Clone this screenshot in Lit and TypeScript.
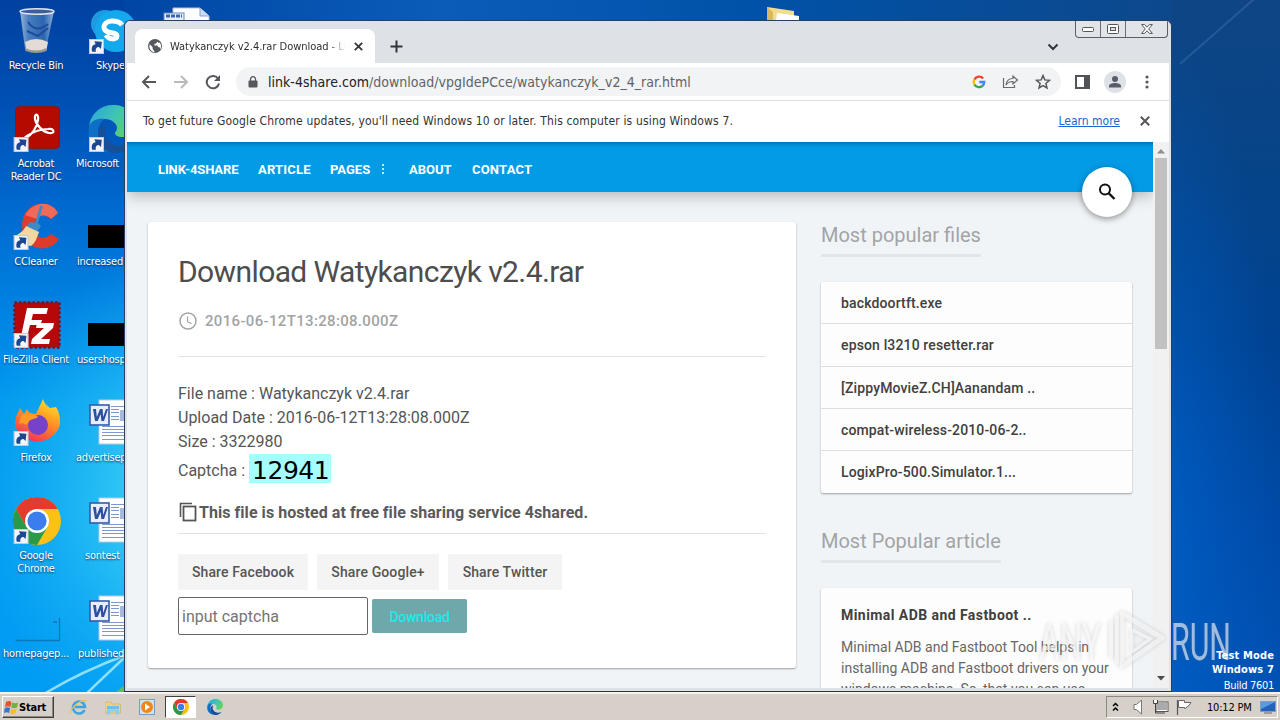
import { LitElement, html, css, svg, nothing } from "lit";
import { customElement } from "lit/decorators.js";

const shortcut = svg`<g><rect x="0.5" y="0.5" width="13" height="13" fill="#f4f6fa" stroke="#c3cbd8"/><path d="M3 12C1.8 8 3.2 5 6.200 4.800L5 2.200l7 .4-.8 6.800-2-2C6.800 7.400 5.600 9.400 6.600 12z" fill="#1c4690"/></g>`;

const chromeLogo = svg`<circle cx="24" cy="24" r="24" fill="#fbc116"/>
  <path d="M24 24 34.4 30 24 48A24 24 0 0 1 3.2 12L13.6 30z" fill="#2a9a48"/>
  <path d="M3.2 12A24 24 0 0 1 44.8 12H24L13.6 30z" fill="#e33b2e"/>
  <circle cx="24" cy="24" r="12" fill="#fff"/><circle cx="24" cy="24" r="9.6" fill="#3b7ded"/>`;

const edgeLogo = svg`<defs><linearGradient id="eg" x1="0" y1="0" x2="1" y2=".4"><stop offset="0" stop-color="#28a5dc"/><stop offset=".6" stop-color="#3fc4b4"/><stop offset="1" stop-color="#63d063"/></linearGradient></defs>
  <path d="M1 21C3 8 13 0 25 0c13 0 23 8 23 19 0 8-6 13-13 13-6 0-8-2-8-4 0-1 2-2 2-5 0-5-6-9-12-9-8 0-14 4-16 7z" fill="url(#eg)"/>
  <path d="M1 21c3-6 9-8 16-7-5 3-7 8-7 14 0 8 6 17 16 19C11 50-2 38 1 21z" fill="#0f6fc4"/>
  <path d="M19 19c-5 8-1 21 13 22 5 0 9-1 12-3-5 7-12 10-19 10-9-1-15-10-15-18 0-6 4-10 9-11z" fill="#174f98"/>`;

const wordIcon = svg`<rect x="10" y="1" width="40" height="44" fill="#fdfeff" stroke="#b9c7e0"/>
  <g stroke="#7f98cc" stroke-width="1"><path d="M22 7.5h26M22 10.5h8M22 13.5h8M22 17.500h8M22 20.500h8M13 27.500h36M13 30.500h36M13 33.500h36M13 36.500h36M13 40.500h36"/></g>
  <rect x="31" y="11" width="16" height="11" fill="#a9b9dc"/>
  <rect x="1" y="6" width="19" height="20" fill="#e7eefb" stroke="#355ba9" stroke-width="1.6"/>
  <path d="M4 10h3l.8 8L11 10h2.600l.6 8L17 10h2l-4 12h-2.600l-.7-7-3 7H6z" fill="#2c4f9e"/>`;

const icons: Record<string, unknown> = {
  bin: svg`<defs><linearGradient id="bn"><stop offset="0" stop-color="#a3bddb"/><stop offset=".25" stop-color="#4f82c0"/><stop offset=".7" stop-color="#2f68b2"/><stop offset="1" stop-color="#9dbbdc"/></linearGradient></defs>
    <path d="M4 4 9 42q10 6 21 0L38 4z" fill="url(#bn)" opacity=".92"/><path d="M9 35q11-6 23 0l-1.500 8q-10 4-20 0z" fill="#e3dcd4"/><path d="M9 41q11 5 21.500 0v3q-10 4-21 0z" fill="#9b9894"/>
    <ellipse cx="21" cy="4.500" rx="17" ry="2.800" fill="#3c5f99" stroke="#e0e7ee" stroke-width="1.400"/><path d="M12 15q8 12 20 2M11 24l11 5 10-8" stroke="#1d4c9a" fill="none" stroke-width="2"/>`,
  acrobat: svg`<rect x="2.500" y="1.500" width="44" height="42" rx="4" fill="#b30b00" stroke="#7e1a1a"/>
    <path d="M13 33c6-3 11-11 12-18 1-7-4-7-3-1 1 6 8 13 14 14 7 1 5-5-1-4-8 0-15 3-21 7-3 2-3 3-1 2z" fill="none" stroke="#fff" stroke-width="2.200"/>`,
  ccleaner: svg`<path d="M45 10 38 16c-6-6-16-4-17 6-1 12 9 17 17 9l8 5C38 49 19 48 12 36 5 18 12 3 26 1c8-1 15 2 19 9z" fill="#de3b2b"/><path d="M45 10 38 16c-5-5-11-5-14 0L12 12C20-1 37-4 45 10z" fill="#ef6a58"/>
    <path d="M27 3h3l-5 17 3 3-5 7-10-6 4-5 5 1z" fill="#3d8bc6"/><path d="M13 23l13 6c-2 6-4 11-8 14C11 42 5 38 1 33c6-2 10-6 12-10z" fill="#f3d7a0"/>`,
  filezilla: svg`<rect x="1.500" y="1.500" width="45" height="45" fill="#b60808" stroke="#7c1420" stroke-width="2.500" stroke-dasharray="2.500 2"/>
    <path d="M14 7h21l-1.500 6H20l-1.500 6H29l-1.500 5H17l-4 16H7zM24 22h17l-1 5-12 11h9l-1 5H18l1-5 12-11h-8z" fill="#fff"/>`,
  firefox: svg`<defs><linearGradient id="fx" x1=".8" y1="0" x2=".3" y2="1"><stop offset="0" stop-color="#ffe32e"/><stop offset=".45" stop-color="#ff9421"/><stop offset="1" stop-color="#f52f57"/></linearGradient></defs>
    <path d="M7 9l4 6 3-5c1 3 4 5 9 5l7-15c2 6 5 7 7 9l6-1c4 6 4 12 4 17a23 22 0 0 1-45 0C2 18 5 14 7 9z" fill="url(#fx)"/><circle cx="25" cy="26" r="10" fill="#7542c9"/><path d="M8 17c6-5 15-2 17 1-4 3-9 1-11 8-3-2-7-2-8-1z" fill="#ff9b22"/>`,
  chrome: chromeLogo,
  skype: svg`<circle cx="14" cy="15" r="14" fill="#1e9be0"/><circle cx="25" cy="22" r="21" fill="#14a9ec"/><path d="M34 15c-2-3-6-4-10-4-5 0-8 3-8 6 0 8 13 4 13 9 0 4-8 4-11-1" transform="translate(-3 1)" fill="none" stroke="#fff" stroke-width="5"/>`,
  edge: edgeLogo,
  black: svg`<rect width="48" height="23" fill="#000"/>`,
  word: wordIcon,
  homepage: svg`<path d="M.5 23.500h44V1M38 5h4" fill="none" stroke="#1076b8" stroke-width="1.300"/>`,
  folder: svg`<path d="M0 1 27 5v22H0z" fill="#f4dc8c"/><path d="M0 1 6 6v16H0z" fill="#dcb85c"/><path d="M10 7l22 3v12H8z" fill="#fff"/>`,
  sheet: svg`<path d="M9 1h27l9 8v20H9z" fill="#fbfdff" stroke="#b7c5dd"/><path d="M36 1v8h9" fill="#cfdcf0" stroke="#8ba3cf"/><rect x="0" y="6" width="20" height="20" fill="#e7eefb" stroke="#6885c4"/><path d="M2 9h16" stroke="#3e63ab" stroke-width="3" stroke-dasharray="4 1"/>`,
};

interface Shortcut { icon: string; x: number; y: number; w: number; h: number; vb: string; link?: boolean; label?: string[]; lx?: number; ly?: number; center?: boolean }

const shortcuts: Shortcut[] = [
  { icon: "bin", x: 16, y: 7, w: 43, h: 48, vb: "0 0 43 48", label: ["Recycle Bin"], lx: 36, ly: 59, center: true },
  { icon: "acrobat", x: 13, y: 105, w: 48, h: 48, vb: "0 0 48 48", link: true, label: ["Acrobat", "Reader DC"], lx: 36, ly: 157, center: true },
  { icon: "ccleaner", x: 13, y: 203, w: 48, h: 48, vb: "0 0 48 48", link: true, label: ["CCleaner"], lx: 36, ly: 255, center: true },
  { icon: "filezilla", x: 13, y: 301, w: 48, h: 48, vb: "0 0 48 48", link: true, label: ["FileZilla Client"], lx: 36, ly: 353, center: true },
  { icon: "firefox", x: 13, y: 399, w: 48, h: 48, vb: "0 0 48 48", link: true, label: ["Firefox"], lx: 36, ly: 451, center: true },
  { icon: "chrome", x: 13, y: 497, w: 48, h: 48, vb: "0 0 48 48", link: true, label: ["Google", "Chrome"], lx: 36, ly: 549, center: true },
  { icon: "homepage", x: 15, y: 617, w: 46, h: 25, vb: "0 0 46 25", label: ["homepagep..."], lx: 36, ly: 647, center: true },
  { icon: "skype", x: 91, y: 9, w: 48, h: 48, vb: "0 0 48 48", link: true, label: ["Skype"], lx: 96, ly: 59 },
  { icon: "edge", x: 88, y: 105, w: 48, h: 48, vb: "0 0 48 48", link: true, label: ["Microsoft"], lx: 76, ly: 157 },
  { icon: "black", x: 88, y: 225, w: 48, h: 23, vb: "0 0 48 23", label: ["increased"], lx: 77, ly: 255 },
  { icon: "black", x: 88, y: 323, w: 48, h: 23, vb: "0 0 48 23", label: ["usershosp"], lx: 77, ly: 353 },
  { icon: "word", x: 89, y: 399, w: 48, h: 48, vb: "0 0 48 48", label: ["advertisep"], lx: 76, ly: 451 },
  { icon: "word", x: 89, y: 497, w: 48, h: 48, vb: "0 0 48 48", label: ["sontest"], lx: 85, ly: 549 },
  { icon: "word", x: 89, y: 595, w: 48, h: 48, vb: "0 0 48 48", label: ["published"], lx: 78, ly: 647 },
  { icon: "sheet", x: 164, y: 7, w: 48, h: 30, vb: "0 0 48 30" },
  { icon: "folder", x: 767, y: 6, w: 34, h: 30, vb: "0 0 34 30" },
];

@customElement("desktop-icons")
class DesktopIcons extends LitElement {
  static styles = css`
    :host { display: block; }
    .icon { position: absolute; overflow: visible; }
    .label { position: absolute; font: 11px/13px "DejaVu Sans Condensed", "DejaVu Sans", sans-serif; font-stretch: condensed; letter-spacing: -0.22px; color: #fff; text-shadow: 0 1px 2px rgba(0, 20, 60, 0.8); white-space: nowrap; }
    .center { text-align: center; transform: translateX(-50%); }
    .line { display: block; }
  `;
  render() {
    return shortcuts.map((s) => html`
      <svg class="icon" style="left:${s.x}px;top:${s.y}px" width=${s.w} height=${s.h} viewBox=${s.vb}>
        ${icons[s.icon]}${s.link ? svg`<g transform="translate(${s.x > 80 ? 89 - s.x : 0.6} ${s.icon === "skype" ? 30 : 32}) scale(1.07)">${shortcut}</g>` : nothing}
      </svg>
      ${s.label ? html`<div class="label ${s.center ? "center" : ""}" style="left:${s.lx}px;top:${s.ly}px">${s.label.map((l) => html`<span class="line">${l}</span>`)}</div>` : nothing}`);
  }
}

@customElement("browser-chrome")
class BrowserChrome extends LitElement {
  static styles = css`
    :host { display: block; font-family: "DejaVu Sans Condensed", "DejaVu Sans", sans-serif; font-stretch: condensed; color: #3c4043; }
    * { box-sizing: border-box; }
    svg { display: block; flex: none; }
    .strip { height: 42px; display: flex; align-items: flex-end; background: #dee1e6; padding-left: 8px; position: relative; }
    .tab { width: 240px; height: 34px; background: #fff; border-radius: 8px 8px 0 0; display: flex; align-items: center; padding: 0 12px 0 13px; }
    .tab-title { width: 176px; margin: 0 8px; font-size: 11px; letter-spacing: -0.03px; white-space: nowrap; overflow: hidden; -webkit-mask: linear-gradient(90deg, #000 90%, transparent 100%); mask: linear-gradient(90deg, #000 90%, transparent 100%); color: #2c2f33; }
    .plus { margin: 0 0 10px 15px; }
    .caret { margin: 0 110px 12px auto; }
    .controls { position: absolute; right: 1px; top: 0; height: 17px; width: 93px; border: 1px solid #5b5e63; border-top: 0; border-radius: 0 0 4px 4px; display: grid; grid-template-columns: 25px 25px 1fr; background: #e1e4e9; }
    .ctl { display: grid; place-items: center; border-right: 1px solid #6b6e73; }
    .ctl:last-child { border: 0; }
    .toolbar { height: 38px; display: flex; align-items: center; background: #fff; padding-left: 13px; border-bottom: 1px solid #dcdee2; }
    .nav-icon { margin-right: 14px; }
    .omni { width: 825px; height: 29px; border-radius: 15px; background: #f1f3f4; display: flex; align-items: center; padding: 0 10px 0 12px; font-size: 14px; letter-spacing: 0.02px; color: #5f6368; }
    .url { margin-left: 10px; flex: 1; white-space: nowrap; }
    .host { color: #202124; }
    .action { margin-left: 16px; }
    .panel { margin: 0 14px; }
    .avatar { width: 22px; height: 22px; border-radius: 50%; background: #dee1e6; display: grid; place-items: center; margin-right: 19px; }
    .info { height: 41px; display: flex; align-items: center; background: #fff; padding: 0 19px 2px 16px; font-size: 12px; color: #333; }
    .info-text { flex: 1; letter-spacing: 0.16px; white-space: nowrap; }
    .learn { color: #1a66d6; text-decoration: underline; margin-right: 20px; letter-spacing: 0; }
  `;
  render() {
    return html`
      <div class="strip">
        <div class="tab">
          <svg width="14" height="14" viewBox="0 0 24 24"><circle cx="12" cy="12" r="12" fill="#55585c"/><path d="M3 9l5 5v3l3 4v2C4 21 1 15 3 9zm13-6v2l-3 3h-2v3h5l2 3h2l1 4c2-4 2-9-1-12l-2 1-2-3z" fill="#fff"/></svg>
          <span class="tab-title">Watykanczyk v2.4.rar Download - Link</span>
          <svg width="9" height="9" viewBox="0 0 9 9"><path d="M.8.8l7.400 7.400M8.200.8.8 8.200" stroke="#333639" stroke-width="1.800"/></svg>
        </div>
        <svg class="plus" width="13" height="13" viewBox="0 0 13 13"><path d="M6.500.5v12M.5 6.500h12" stroke="#333639" stroke-width="2"/></svg>
        <svg class="caret" width="12" height="8" viewBox="0 0 12 8"><path d="M1.500 1.500 6 6l4.500-4.500" fill="none" stroke="#333639" stroke-width="2"/></svg>
        <div class="controls">
          <span class="ctl"><svg width="12" height="6" viewBox="0 0 12 6"><rect x=".5" y="1.500" width="11" height="4" rx="1" fill="#fff" stroke="#555"/></svg></span>
          <span class="ctl"><svg width="12" height="10" viewBox="0 0 12 10"><rect x=".5" y=".5" width="11" height="9" rx="1" fill="#fff" stroke="#555"/><rect x="3.500" y="3.500" width="5" height="3" fill="#dee1e6" stroke="#555"/></svg></span>
          <span class="ctl"><svg width="12" height="10" viewBox="0 0 12 10"><path d="M.6.6h3l2.400 2.600L8.400.6h3L7.700 5l3.700 4.400h-3L6 6.800 3.600 9.400h-3L4.300 5z" fill="#fff" stroke="#555"/></svg></span>
        </div>
      </div>
      <div class="toolbar">
        <svg class="nav-icon" width="18" height="16" viewBox="0 0 18 16"><path d="M16 8H3M9 2 3 8l6 6" fill="none" stroke="#55585c" stroke-width="2"/></svg>
        <svg class="nav-icon" width="18" height="16" viewBox="0 0 18 16"><path d="M2 8h13M9 2l6 6-6 6" fill="none" stroke="#b8babd" stroke-width="2"/></svg>
        <svg class="nav-icon" width="18" height="16" viewBox="0 0 18 16"><path d="M14 4.500A6.200 6.200 0 1 0 15 9.500" fill="none" stroke="#55585c" stroke-width="2"/><path d="M16 1v6h-6z" fill="#55585c"/></svg>
        <div class="omni">
          <svg width="10" height="12" viewBox="0 0 10 12"><rect x=".5" y="4.500" width="9" height="7" rx="1" fill="#55585c"/><path d="M2.500 5V3.200a2.500 2.500 0 0 1 5 0V5" fill="none" stroke="#55585c" stroke-width="1.300"/></svg>
          <span class="url"><span class="host">link-4share.com</span>/download/vpgIdePCce/watykanczyk_v2_4_rar.html</span>
          <svg class="action" width="14" height="14" viewBox="0 0 48 48"><g fill="none" stroke-width="8"><path d="M38 12A18 18 0 0 0 8.500 15" stroke="#ea4335"/><path d="M8.500 15a18 18 0 0 0 0 18" stroke="#fbbc05"/><path d="M8.500 33A18 18 0 0 0 36 37" stroke="#34a853"/><path d="M36 37a18 18 0 0 0 6-13H25" stroke="#4285f4"/></g></svg>
          <svg class="action" width="17" height="15" viewBox="0 0 17 15"><path d="M1.500 4v9.500h11V11M4 11c.5-4 3-6.500 7-6.500V2l4.500 4L11 10V7.500C8 7.500 5.500 8.500 4 11z" fill="none" stroke="#66696d" stroke-width="1.200"/></svg>
          <svg class="action" width="16" height="16" viewBox="0 0 16 16"><path d="M8 1.500l1.800 4.400 4.700.4-3.600 3.100 1.100 4.600L8 11.600 4 14l1.100-4.600L1.500 6.300l4.700-.4z" fill="none" stroke="#55585c" stroke-width="1.500"/></svg>
        </div>
        <svg class="panel" width="15" height="14" viewBox="0 0 15 14"><rect x="1" y="1" width="13" height="12" fill="none" stroke="#505357" stroke-width="2"/><path d="M9 0h6v14H9z" fill="#505357"/></svg>
        <span class="avatar"><svg width="14" height="14" viewBox="0 0 14 14"><circle cx="7" cy="4" r="3" fill="#5a5d66"/><path d="M1 12.500V11c0-2 3-3 6-3s6 1 6 3v1.500z" fill="#5a5d66"/></svg></span>
        <svg width="4" height="14" viewBox="0 0 4 14"><g fill="#55585c"><circle cx="2" cy="2" r="1.600"/><circle cx="2" cy="7" r="1.600"/><circle cx="2" cy="12" r="1.600"/></g></svg>
      </div>
      <div class="info">
        <span class="info-text">To get future Google Chrome updates, you'll need Windows 10 or later. This computer is using Windows 7.</span>
        <span class="learn">Learn more</span>
        <svg width="10" height="10" viewBox="0 0 10 10"><path d="M.8.8l8.400 8.400M9.200.8.8 9.200" stroke="#55585c" stroke-width="2"/></svg>
      </div>`;
  }
}

@customElement("share-page")
class SharePage extends LitElement {
  static styles = css`
    :host { display: block; position: relative; height: 546px; background: #f1f4f7; font-family: Roboto, sans-serif; overflow: hidden; color: #555; }
    * { box-sizing: border-box; }
    .view { display: flex; height: 100%; }
    .page { width: 1026px; height: 100%; overflow: hidden; }
    .nav { height: 50px; background: #039be5; box-shadow: inset 0 5px 5px -4px rgba(0, 40, 80, 0.55), 0 3px 16px rgba(0, 0, 0, 0.28); display: grid; grid-template-columns: 100px 72px 49px 30px 63px auto; align-items: center; padding: 4px 0 0 31px; color: #fff; font-size: 13px; font-weight: 700; white-space: nowrap; }
    .wide { letter-spacing: 0.2px; }
    .tight { letter-spacing: -0.12px; }
    .dots { opacity: 0.75; }
    .columns { display: grid; grid-template-columns: 648px 311px; column-gap: 25px; padding: 30px 21px 0; }
    .card { background: #fff; border-radius: 2px; box-shadow: 0 1px 2px rgba(0, 0, 0, 0.35); }
    .main { height: 446px; padding: 30px 30px 0; }
    .title { margin: 0; font-size: 30px; font-weight: 400; line-height: 40px; color: #4d4d4d; white-space: nowrap; letter-spacing: -0.61px; }
    .date { display: flex; align-items: center; height: 20px; margin-top: 19px; font-size: 15px; color: #a3a3a3; font-weight: 500; gap: 8px; letter-spacing: 0.33px; }
    .rule { height: 1px; background: #e2e2e2; }
    .rule-date { margin-top: 25px; }
    .rule-hosted { margin-top: 9px; }
    .meta { margin-top: 25px; font-size: 16px; line-height: 24px; white-space: nowrap; }
    .cap-row { display: flex; align-items: center; height: 34px; gap: 4px; }
    .code { width: 82px; height: 29px; margin-top: -5px; background: #a6fdfd; color: #000; font: 25px/34px "DejaVu Sans", sans-serif; letter-spacing: -0.5px; padding-left: 3px; }
    .hosted { display: flex; align-items: center; font-weight: 700; font-size: 16px; height: 24px; margin-top: 12px; color: #5a5a5a; white-space: nowrap; gap: 1px; letter-spacing: 0.05px; }
    .shares { display: flex; gap: 9px; margin-top: 20px; }
    .share { height: 36px; line-height: 36px; background: #f4f4f4; font-size: 14px; font-weight: 500; text-align: center; color: #555; white-space: nowrap; letter-spacing: 0.12px; }
    .form { display: flex; align-items: center; gap: 4px; margin-top: 7px; }
    .field { width: 190px; height: 38px; border: 1px solid #666; border-radius: 2px; line-height: 38px; padding-left: 3px; font-size: 16px; color: #757575; }
    .dl { width: 95px; height: 34px; line-height: 36px; border-radius: 2px; background: #6ea8aa; color: #1eeaea; font-size: 14px; font-weight: 500; text-align: center; letter-spacing: -0.25px; }
    .side-title { display: block; width: max-content; margin: 0; height: 35px; font-size: 20px; line-height: 26px; font-weight: 400; color: #a2a4a6; border-bottom: 3px solid #e2e6e9; white-space: nowrap; }
    .list { background: #fdfdfd; margin: 25px 0 35px; }
    .item { height: 42.300px; line-height: 42px; padding-left: 20px; font-size: 14px; font-weight: 500; color: #404040; border-bottom: 1px solid #dedede; white-space: nowrap; letter-spacing: 0.14px; }
    .item:last-child { border: 0; }
    .article { background: #fdfdfd; margin-top: 25px; padding: 16px 0 0 20px; height: 180px; }
    .article-title { font-size: 14px; font-weight: 700; line-height: 22px; color: #404040; letter-spacing: 0.44px; }
    .article-text { margin-top: 11px; font-size: 14px; line-height: 21px; color: #666; white-space: nowrap; }
    .row { display: block; }
    .scroll { width: 16px; background: #f1f1f1; display: flex; flex-direction: column; align-items: center; padding: 7px 0; }
    .thumb { width: 12px; height: 191px; margin-top: 4px; background: #c1c1c1; }
    .arrow-down { margin-top: auto; }
    .search { position: absolute; left: 955px; top: 25px; width: 50px; height: 50px; border-radius: 50%; background: #fff; box-shadow: 0 2px 6px rgba(0, 0, 0, 0.4); display: grid; place-items: center; }
  `;
  render() {
    const files = ["backdoortft.exe", "epson l3210 resetter.rar", "[ZippyMovieZ.CH]Aanandam ..", "compat-wireless-2010-06-2..", "LogixPro-500.Simulator.1..."];
    const shares: [string, number][] = [["Share Facebook", 130], ["Share Google+", 122], ["Share Twitter", 114]];
    return html`
      <div class="view">
        <div class="page">
          <div class="nav"><span class="tight">LINK-4SHARE</span><span class="wide">ARTICLE</span><span>PAGES</span><svg class="dots" width="8" height="10" viewBox="0 0 8 10"><path d="M3 0h2v2H3zM3 4h2v2H3zM3 8h2v2H3z" fill="#fff"/></svg><span>ABOUT</span><span class="wide">CONTACT</span></div>
          <div class="columns">
            <div class="card main">
              <h1 class="title">Download Watykanczyk v2.4.rar</h1>
              <div class="date"><svg width="19" height="18" viewBox="0 0 19 18"><circle cx="10" cy="9" r="8" fill="none" stroke="#a3a3a3" stroke-width="1.500"/><path d="M9.500 4.500v5l4 2.300" fill="none" stroke="#a3a3a3" stroke-width="1.200"/></svg>2016-06-12T13:28:08.000Z</div>
              <div class="rule rule-date"></div>
              <div class="meta">
                <span class="row">File name : Watykanczyk v2.4.rar</span>
                <span class="row">Upload Date : 2016-06-12T13:28:08.000Z</span>
                <span class="row">Size : 3322980</span>
                <div class="cap-row">Captcha : <span class="code">12941</span></div>
              </div>
              <div class="hosted"><svg width="20" height="20" viewBox="0 0 20 20"><path d="M2.500 15V1.500H14" fill="none" stroke="#555" stroke-width="1.600"/><rect x="5.500" y="4.500" width="12" height="14" fill="none" stroke="#555" stroke-width="1.800"/></svg>This file is hosted at free file sharing service 4shared.</div>
              <div class="rule rule-hosted"></div>
              <div class="shares">${shares.map(([t, w]) => html`<span class="share" style="width:${w}px">${t}</span>`)}</div>
              <div class="form"><div class="field">input captcha</div><div class="dl">Download</div></div>
            </div>
            <div>
              <h2 class="side-title">Most popular files</h2>
              <div class="card list">${files.map((f) => html`<div class="item">${f}</div>`)}</div>
              <h2 class="side-title">Most Popular article</h2>
              <div class="card article">
                <div class="article-title">Minimal ADB and Fastboot ..</div>
                <div class="article-text"><span class="row">Minimal ADB and Fastboot Tool helps in</span><span class="row">installing ADB and Fastboot drivers on your</span><span class="row">windows machine. So, that you can use</span></div>
              </div>
            </div>
          </div>
        </div>
        <div class="scroll">
          <svg width="8" height="5" viewBox="0 0 8 5"><path d="M4 0l4 4.500H0z" fill="#8e8e8e"/></svg>
          <div class="thumb"></div>
          <svg class="arrow-down" width="8" height="5" viewBox="0 0 8 5"><path d="M0 0h8L4 4.500z" fill="#4a4a4a"/></svg>
        </div>
      </div>
      <div class="search"><svg width="20" height="20" viewBox="0 0 20 20"><circle cx="8" cy="7.500" r="5" fill="none" stroke="#111" stroke-width="2"/><path d="M11.500 11l6 6" stroke="#111" stroke-width="2.400"/></svg></div>`;
  }
}

@customElement("task-bar")
class TaskBar extends LitElement {
  static styles = css`
    :host { display: flex; align-items: center; height: 28px; background: #d6d0c9; box-shadow: inset 0 2px 0 #f5f3ef; padding: 2px 2px 0 2px; box-sizing: border-box; font: 11px "DejaVu Sans Condensed", "DejaVu Sans", sans-serif; font-stretch: condensed; color: #000; }
    * { box-sizing: border-box; }
    svg { display: block; flex: none; }
    .start { display: flex; align-items: center; width: 52px; height: 22px; border: 1px solid; border-color: #fff #404040 #404040 #fff; box-shadow: inset -1px -1px 0 #8c8882; padding-left: 1px; font-weight: 700; gap: 0; letter-spacing: -0.2px; }
    .apps { display: flex; margin-left: 9px; gap: 3px; }
    .app { width: 31px; height: 22px; display: grid; place-items: center; }
    .active { background: #fff; border: 1px solid; border-color: #404040 #fff #fff #404040; }
    .tray { margin-left: auto; width: 172px; height: 22px; border: 1px solid; border-color: #8c8882 #fff #fff #8c8882; display: flex; align-items: center; padding-left: 5px; white-space: nowrap; }
    .speaker { margin-left: 14px; }
    .network { margin-left: 9px; }
    .flag { margin-left: 7px; }
    .clock { width: 46px; margin: 0 7px 0 14px; letter-spacing: -0.2px; }
  `;
  render() {
    return html`
      <div class="start"><svg width="15" height="15" viewBox="0 0 15 15"><path d="M2 2q3-2 5.500 0L6.500 7Q4 5.500 1 7z" fill="#e5532a"/><path d="M8.200 2.500q3 1.500 6 0L13 7.500q-3 1.500-5.800 0z" fill="#6fb33b"/><path d="M.8 8q3-1.500 5.400 0L5 13q-2.500-1.500-5 0z" fill="#3a76c8"/><path d="M7 8.500q3 1.500 5.700 0l-1.200 5q-3 1.500-5.600 0z" fill="#f4bf2c"/></svg>Start</div>
      <div class="apps">
        <span class="app"><svg width="18" height="16" viewBox="0 0 18 16"><path d="M14.500 11A6 6 0 1 1 15 8H5" fill="none" stroke="#3fa3dd" stroke-width="2.600"/><path d="M1 14C-1 10 12-1 16.500 2.500" fill="none" stroke="#f0c04a" stroke-width="1.300"/></svg></span>
        <span class="app"><svg width="16" height="15" viewBox="0 0 16 15"><path d="M0 2h6l1 2h8.500v9H0z" fill="#ecd083" stroke="#cfae5a" stroke-width=".6"/><path d="M2 6h12v3H2z" fill="#6fc0e8"/><path d="M2 14.500V9.500h12v5h-3v-3H5v3z" fill="#8ccbea"/></svg></span>
        <span class="app"><svg width="16" height="16" viewBox="0 0 16 16"><rect x=".5" y=".5" width="15" height="15" fill="#cfe2f2" stroke="#6da0cf"/><circle cx="8" cy="8" r="6" fill="#f08717"/><path d="M6 4.500 11 8l-5 3.500z" fill="#fff"/></svg></span>
        <span class="app active"><svg width="16" height="16" viewBox="0 0 48 48">${chromeLogo}</svg></span>
        <span class="app"><svg width="16" height="16" viewBox="0 0 48 48">${edgeLogo}</svg></span>
      </div>
      <div class="tray">
        <svg width="7" height="10" viewBox="0 0 7 10"><path d="M1 4l2.500-2.500L6 4M1 8.500 3.500 6 6 8.500" fill="none" stroke="#000" stroke-width="1.500"/></svg>
        <svg class="speaker" width="10" height="16" viewBox="0 0 10 16"><path d="M1 5.500h2.500L8.500 1v14L3.500 10.500H1z" fill="#fff" stroke="#777"/></svg>
        <svg class="network" width="17" height="16" viewBox="0 0 17 16"><rect x="4.500" y="3.500" width="11" height="8" fill="#aaa" stroke="#fff"/><rect x="4" y="3" width="12" height="9.500" fill="none" stroke="#555"/><path d="M1.500 1v3.500h4V1M3.500 4.500V14H13" fill="none" stroke="#444"/><path d="M2.200 1h2.600v3H2.200z" fill="#fff"/></svg>
        <svg class="flag" width="17" height="16" viewBox="0 0 17 16"><path d="M1.500 1v15" stroke="#555" stroke-width="1.200"/><path d="M2.500 1.500h6v2h6.500l-2 3-4 3h-.5v-1h-6z" fill="#fff" stroke="#666"/></svg>
        <span class="clock">10:12 PM</span>
        <svg width="16" height="14" viewBox="0 0 16 14"><rect x=".5" y="1.500" width="15" height="10" fill="#2463bd" stroke="#7c9fca"/><path d="M1 2h14L1 9z" fill="#5a9ae0"/><path d="M4 13h8" stroke="#666"/></svg>
      </div>`;
  }
}

@customElement("app-root")
class AppRoot extends LitElement {
  static styles = css`
    :host { display: block; position: relative; width: 1280px; height: 720px; overflow: hidden; background: #0050b4; }
    .wall { position: absolute; left: 0; top: 0; }
    .window { position: absolute; left: 124px; top: 20px; width: 1048px; height: 672px; box-sizing: border-box; border: 1px solid #27405f; border-bottom-color: #333; border-radius: 6px 6px 0 0; background: #dfe2e6; padding: 0 2px; overflow: hidden; }
    .taskbar { position: absolute; left: 0; right: 0; bottom: 0; }
    .mode { position: absolute; right: 6px; top: 649px; font: 700 11px/14px "DejaVu Sans Condensed", "DejaVu Sans", sans-serif; font-stretch: condensed; letter-spacing: 0.15px; color: #fff; text-align: right; }
    .line { display: block; }
    .build { font-weight: 400; line-height: 17px; letter-spacing: -0.3px; }
    .mark { position: absolute; left: 1030px; top: 600px; overflow: visible; filter: drop-shadow(0 0 2px rgba(110, 110, 110, 0.45)); }
  `;
  render() {
    return html`
      <svg class="wall" width="1280" height="692" viewBox="0 0 1280 692">
        <defs>
          <linearGradient id="l" x1="0" y1="0" x2="0" y2="1"><stop offset="0" stop-color="#0041a0"/><stop offset=".15" stop-color="#0050b4"/><stop offset=".3" stop-color="#0069cf"/><stop offset=".45" stop-color="#0083e2"/><stop offset=".58" stop-color="#0098ee"/><stop offset="1" stop-color="#009cf4"/></linearGradient>
          <radialGradient id="glow" gradientUnits="userSpaceOnUse" cx="220" cy="500" r="260"><stop offset="0" stop-color="#5fe8fa"/><stop offset=".35" stop-color="#3ad0f6" stop-opacity=".85"/><stop offset="1" stop-color="#1bb5f5" stop-opacity="0"/></radialGradient>
          <linearGradient id="r" x1="0" y1="0" x2="0" y2="1"><stop offset="0" stop-color="#0f4584"/><stop offset=".25" stop-color="#064488"/><stop offset=".5" stop-color="#004392"/><stop offset=".75" stop-color="#004aa6"/><stop offset="1" stop-color="#0052b4"/></linearGradient>
          <linearGradient id="t"><stop offset="0" stop-color="#0046a4"/><stop offset=".3" stop-color="#0a5cb8"/><stop offset=".6" stop-color="#0052a8"/><stop offset="1" stop-color="#0d488c"/></linearGradient>
          <radialGradient id="re" gradientUnits="userSpaceOnUse" cx="1150" cy="540" r="130" gradientTransform="translate(0 -1620) scale(1 4)"><stop offset="0" stop-color="#0066d0" stop-opacity=".75"/><stop offset="1" stop-color="#0060c8" stop-opacity="0"/></radialGradient>
        </defs>
        <rect width="640" height="692" fill="url(#l)"/>
        <rect width="640" height="692" fill="url(#glow)"/>
        <rect x="124" width="1048" height="30" fill="url(#t)"/>
        <rect x="1172" width="108" height="692" fill="url(#r)"/>
        <rect x="1172" width="108" height="692" fill="url(#re)"/>
        <path d="M1180 64 1262-8" stroke="#5a8bbd" stroke-opacity=".3" stroke-width="2"/>
        <path d="M44 694Q80 672 126 655M86 694 126 656" fill="none" stroke="#b9f4fb" stroke-opacity=".75" stroke-width="2.500"/>
        <path d="M116 692q4-4 10-7v7z" fill="#5fbf5a"/>
      </svg>
      <desktop-icons></desktop-icons>
      <div class="window"><browser-chrome></browser-chrome><share-page></share-page></div>
      <svg class="mark" width="230" height="80" viewBox="0 0 230 80">
        <g fill="#fff" fill-opacity=".6" font-family="Roboto, sans-serif" font-size="51" font-weight="400">
          <text x="9" y="60" textLength="62" lengthAdjust="spacingAndGlyphs">ANY</text>
          <text x="141" y="60" textLength="60" lengthAdjust="spacingAndGlyphs">RUN</text>
        </g>
        <g fill="none" stroke="#fff" stroke-opacity=".6" stroke-linejoin="round" stroke-linecap="round">
          <path d="M81 56V23" stroke-width="4"/>
          <path d="M87 62V16" stroke-width="4"/>
          <path d="M93 14 132 38 92 66V14" stroke-width="5"/>
          <path d="M102 30v22l18-13z" stroke-width="3"/>
        </g>
      </svg>
      <div class="mode"><span class="line">Test Mode</span><span class="line">Windows 7</span><span class="line build">Build 7601</span></div>
      <task-bar class="taskbar"></task-bar>`;
  }
}
